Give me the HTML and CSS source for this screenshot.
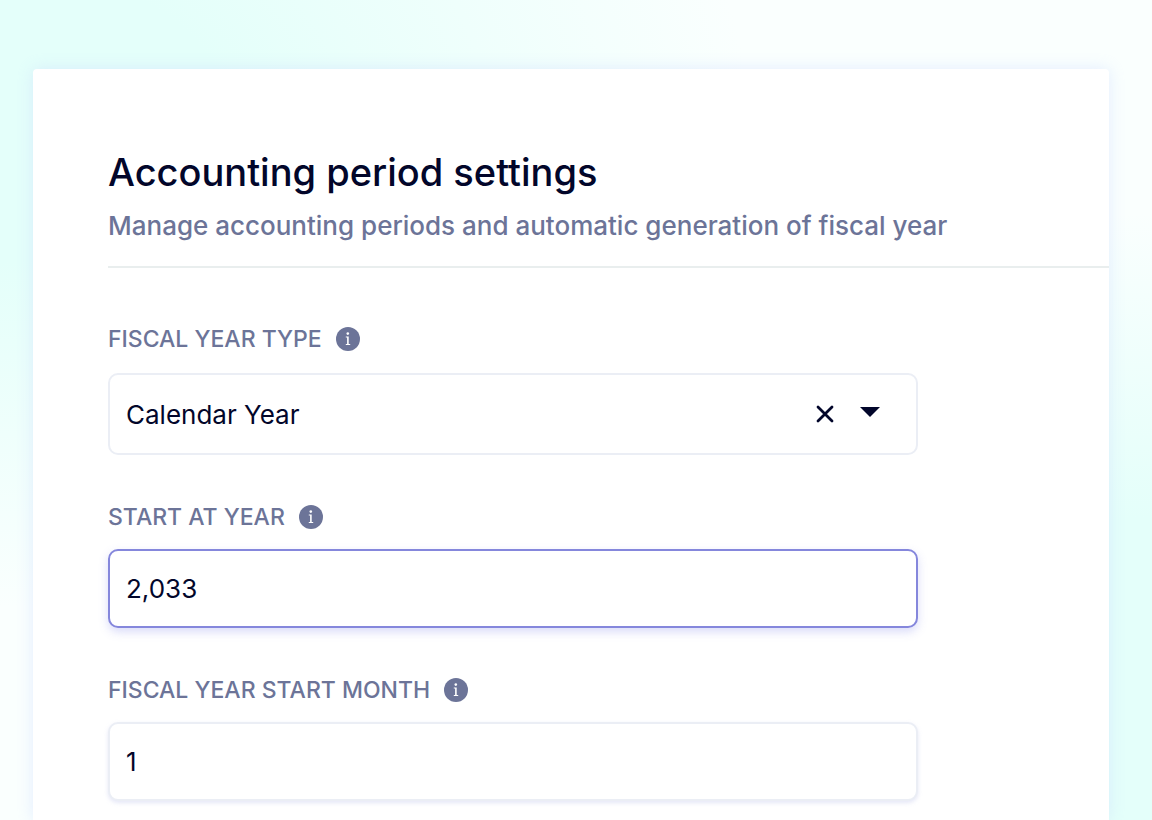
FILE: index.html
```html
<!DOCTYPE html>
<html lang="en">
<head>
<meta charset="utf-8">
<meta name="viewport" content="width=device-width, initial-scale=1">
<title>Accounting period settings</title>
<link rel="stylesheet" href="styles.css">
</head>
<body>
<svg class="sprite" aria-hidden="true">
  <symbol id="info" viewBox="0 0 24 24">
    <circle cx="12" cy="12" r="12" fill="currentColor"/>
    <circle cx="11.8" cy="6.6" r="1.3" fill="#fff"/>
    <path d="M9.8 9.5h2.9v7.4h1.5v1H9.8v-1h1.3v-6.4H9.8z" fill="#fff"/>
  </symbol>
</svg>
<main class="card">
  <header class="header">
    <h1 class="title">Accounting period settings</h1>
    <p class="subtitle">Manage accounting periods and automatic generation of fiscal year</p>
  </header>
  <form class="form">
    <div class="field field-select">
      <div class="label-row">
        <label class="label" for="type">FISCAL YEAR TYPE</label>
        <svg class="info"><use href="#info"/></svg>
      </div>
      <div class="select-box">
        <select class="control select" id="type">
          <option>Calendar Year</option>
        </select>
        <div class="select-actions">
          <button class="clear" type="button" aria-label="Clear">
            <svg class="cross" viewBox="0 0 18 18"><path d="M2 2l14 14M16 2L2 16" fill="none" stroke="currentColor" stroke-width="2.8" stroke-linecap="round"/></svg>
          </button>
          <svg class="arrow" viewBox="0 0 20 14" aria-hidden="true"><path d="M0 0h20L10 10z" fill="currentColor"/></svg>
        </div>
      </div>
    </div>
    <div class="field">
      <div class="label-row">
        <label class="label" for="year">START AT YEAR</label>
        <svg class="info"><use href="#info"/></svg>
      </div>
      <input class="control input active" id="year" type="text" value="2,033">
    </div>
    <div class="field">
      <div class="label-row">
        <label class="label" for="month">FISCAL YEAR START MONTH</label>
        <svg class="info"><use href="#info"/></svg>
      </div>
      <input class="control input" id="month" type="text" value="1">
    </div>
  </form>
</main>
</body>
</html>
```
FILE: styles.css
```css
* {
  box-sizing: border-box;
}

body {
  margin: 0;
  min-height: 100vh;
  display: flex;
  flex-direction: column;
  padding: 69px 43px 0 33px;
  font-family: Inter, "Liberation Sans", sans-serif;
  color: #02062a;
  background:
    radial-gradient(ellipse 65% 60% at 0% 14%, #e4fffa 30%, rgba(228, 255, 250, 0) 100%),
    radial-gradient(ellipse 50% 62% at 100% 88%, #e4fffa 40%, rgba(228, 255, 250, 0) 100%),
    #fafffe;
}

.sprite {
  position: absolute;
  width: 0;
  height: 0;
}

.card {
  flex: 1;
  padding: 79px 0 19px 75px;
  background: #fff;
  border-radius: 4px 4px 0 0;
  box-shadow: 0 0 16px rgba(200, 212, 255, 0.45);
}

.header {
  padding-bottom: 20px;
  border-bottom: 2px solid #e9eeee;
}

.title {
  margin: 0;
  font-size: 38px;
  line-height: 48px;
  font-weight: 500;
}

.subtitle {
  margin: 10px 0 0;
  font-size: 26px;
  line-height: 40px;
  font-weight: 500;
  color: #6c7498;
}

.form {
  display: flex;
  flex-direction: column;
  gap: 46px;
  max-width: 810px;
  padding-top: 55px;
}

.field {
  display: flex;
  flex-direction: column;
  gap: 16px;
}

.field-select {
  gap: 18px;
}

.label-row {
  display: flex;
  align-items: center;
  gap: 14px;
}

.label {
  font-size: 23px;
  line-height: 32px;
  font-weight: 500;
  color: #6c7498;
}

.info {
  width: 24px;
  height: 24px;
  color: #6c7498;
}

.control {
  display: block;
  width: 100%;
  height: 79px;
  margin: 0;
  padding: 0 16px;
  border: 2px solid #ebeef5;
  border-radius: 10px;
  background: #fff;
  color: #02062a;
  font-family: inherit;
  font-size: 26px;
  outline: none;
}

.input {
  box-shadow: 0 2px 4px rgba(190, 195, 235, 0.4);
}

.active {
  border-color: #8587dc;
  box-shadow: 0 4px 10px rgba(133, 140, 235, 0.3);
}

.select-box {
  display: grid;
  align-items: center;
}

.select-box > * {
  grid-area: 1 / 1;
}

.select {
  height: 82px;
  appearance: none;
}

.select-actions {
  display: flex;
  align-items: center;
  justify-self: end;
  gap: 26px;
  padding-right: 38px;
}

.clear {
  display: flex;
  padding: 0;
  border: 0;
  background: none;
  color: inherit;
}

.cross {
  width: 18px;
  height: 18px;
}

.arrow {
  width: 20px;
  height: 14px;
}
```
